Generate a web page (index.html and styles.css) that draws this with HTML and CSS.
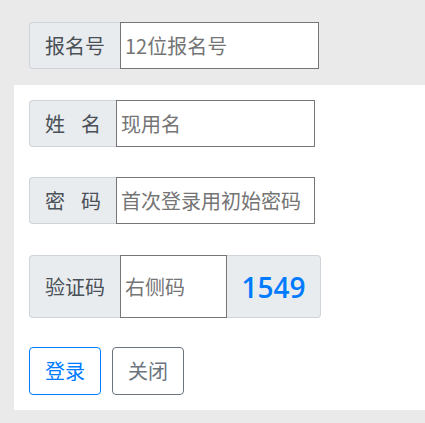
FILE: index.html
```html
<!DOCTYPE html>
<html lang="zh">
<head>
<meta charset="utf-8">
<title>登录</title>
<link rel="stylesheet" href="styles.css">
</head>
<body>
<div class="group first">
  <span class="addon label">报名号</span>
  <input class="field" type="text" placeholder="12位报名号">
</div>
<div class="panel">
  <div class="group">
    <span class="addon label narrow">姓<span class="sp"> </span>名</span>
    <input class="field" type="text" placeholder="现用名">
  </div>
  <div class="group">
    <span class="addon label narrow">密<span class="sp"> </span>码</span>
    <input class="field" type="password" placeholder="首次登录用初始密码">
  </div>
  <div class="group tall">
    <span class="addon label">验证码</span>
    <input class="field short" type="text" placeholder="右侧码">
    <span class="addon code">1549</span>
  </div>
  <div class="actions">
    <button class="btn primary" type="button">登录</button>
    <button class="btn secondary" type="button">关闭</button>
  </div>
</div>
</body>
</html>
```

FILE: styles.css
```css
html, body {
  margin: 0;
  padding: 0;
  background: #eaeaea;
  font-family: "Noto Sans CJK SC", "Noto Sans", sans-serif;
  font-size: 20px;
  color: #495057;
}
body {
  padding-top: 22px;
  height: 423px;
  box-sizing: border-box;
  overflow: hidden;
}
.group {
  display: flex;
  height: 47px;
  margin-left: 29px;
}
.group.first {
  margin-bottom: 16px;
}
.panel {
  background: #fff;
  margin-left: 14px;
  padding: 15px 0 15px 15px;
  display: flex;
  flex-direction: column;
  gap: 30px;
}
.panel .group {
  margin-left: 0;
}
.group.tall {
  height: 63px;
  margin-top: 1px;
}
.addon {
  display: flex;
  align-items: center;
  box-sizing: border-box;
  background: #e9ecef;
  border: 1px solid #ced4da;
  line-height: 30px;
  white-space: pre;
}
.label {
  width: 91px;
  padding: 0 15px;
  border-right: none;
  border-radius: 4px 0 0 4px;
}
.label.narrow {
  width: 87px;
}
.sp {
  display: inline-block;
  width: 16px;
}
.field {
  box-sizing: border-box;
  width: 199px;
  height: 100%;
  margin: 0;
  border: 1px solid #767676;
  border-radius: 0;
  padding: 0 4px;
  font-family: "Noto Sans CJK SC", "Noto Sans", sans-serif;
  font-size: 20px;
  color: #495057;
  background: #fff;
  outline: none;
}
.field::placeholder {
  color: #757575;
}
.field.short {
  width: 107px;
}
.code {
  width: 94px;
  justify-content: center;
  border-left: none;
  border-radius: 0 4px 4px 0;
  color: #007bff;
  font-weight: 600;
  font-size: 28px;
  font-family: "Open Sans", "Noto Sans", sans-serif;
}
.actions {
  display: flex;
  gap: 11px;
  margin-top: -1px;
}
.btn {
  box-sizing: border-box;
  height: 48px;
  padding: 0 15px;
  font-family: "Noto Sans CJK SC", "Noto Sans", sans-serif;
  font-size: 20px;
  line-height: 30px;
  background: #fff;
  border-radius: 4px;
  cursor: pointer;
}
.btn.primary {
  border: 1px solid #007bff;
  color: #007bff;
}
.btn.secondary {
  border: 1px solid #6c757d;
  color: #6c757d;
}
```
